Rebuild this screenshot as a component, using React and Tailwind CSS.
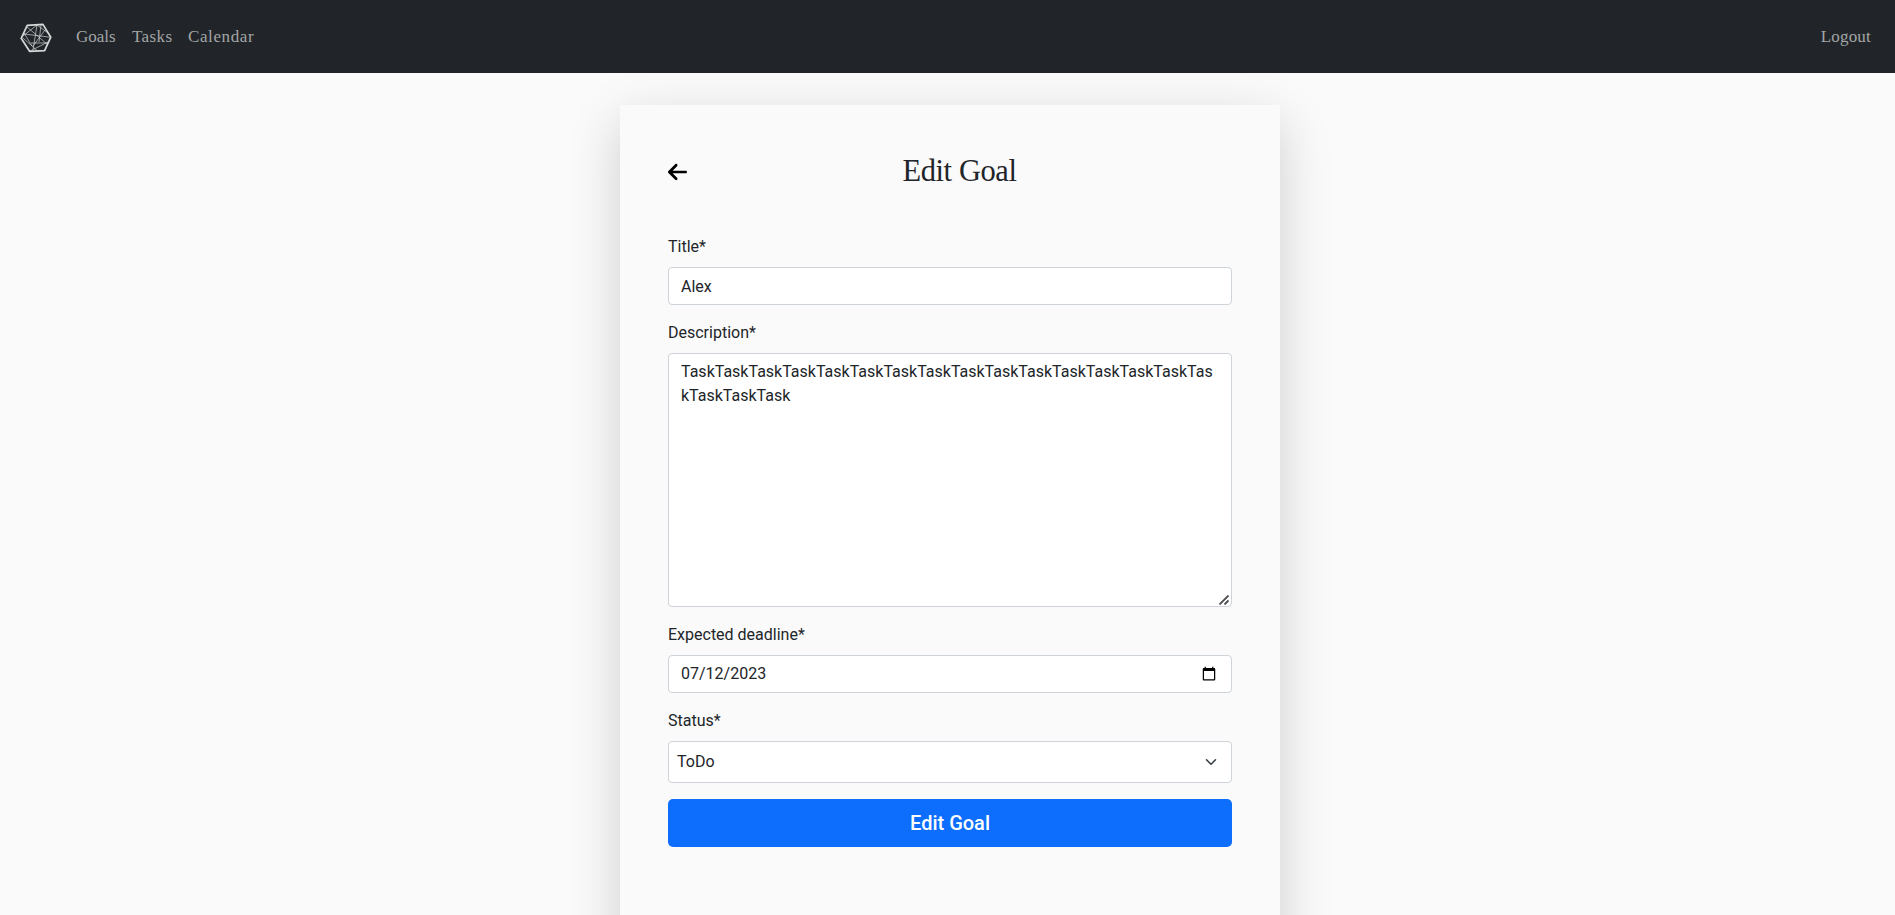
import { FaArrowLeft } from "react-icons/fa6";

const control =
  "block w-full rounded-[4px] border border-[#ced4da] bg-white text-base leading-6 text-[#212529] outline-none";

function Logo() {
  return (
    <svg width="32" height="32" viewBox="0 0 32 32" fill="none" stroke="#d6d7d8" strokeLinejoin="round">
      <path d="M1.2 16.3 7.2 3.3 22.9 2.4 30.8 15.2 24.6 28.6 9.6 29.3Z" strokeWidth="1.7" />
      <path
        d="M3 14 17 3 28 11M4 12 30 15.2M7 5 27 22M17 3 13 28M21 3 19 20M3 16 17 28.5M4 11 12 24M13 24 25 8M9.6 29.3 28 20M11 21 28 21"
        strokeWidth="0.9"
        opacity="0.75"
      />
    </svg>
  );
}

function Field({ label, children }) {
  return (
    <div className="mb-4">
      <label className="mb-2 block text-base leading-6">{label}</label>
      {children}
    </div>
  );
}

export default function App() {
  return (
    <div className="flex h-screen flex-col overflow-hidden bg-[#fafafa] font-[Roboto,sans-serif] text-[#212529]">
      <header className="flex h-[73px] shrink-0 items-center bg-[#212529] pr-6 pl-5 font-['Liberation_Serif',serif] text-[17px] leading-6 text-[#a3a5a6]">
        <div className="mt-[3px] mr-6 shrink-0">
          <Logo />
        </div>
        <nav className="flex flex-1 items-center">
          <a className="w-14">Goals</a>
          <a className="w-14 tracking-[0.4px]">Tasks</a>
          <a className="tracking-[0.6px]">Calendar</a>
        </nav>
        <a className="tracking-[0.2px]">Logout</a>
      </header>
      <main className="flex min-h-0 flex-1 pt-8 pl-[620px]">
        <section className="h-[900px] w-[660px] shrink-0 bg-[#fafafa] px-12 pt-12 shadow-[0_16px_48px_rgba(0,0,0,0.175)]">
          <div className="mb-12 flex h-[34px] items-center">
            <FaArrowLeft className="mt-[4px] h-[22px] w-[19px] text-black" />
            <h1 className="flex-1 pt-[2px] text-center font-['Liberation_Serif',serif] text-[30.5px] leading-[34px] tracking-[-0.4px]">
              Edit Goal
            </h1>
          </div>
          <form>
            <Field label="Title*">
              <input className={`${control} h-[38px] px-3 py-1.5`} defaultValue="Alex" />
            </Field>
            <Field label="Description*">
              <div className="relative">
                <textarea
                  rows={10}
                  className={`${control} h-[254px] resize-none px-3 py-1.5`}
                  defaultValue="TaskTaskTaskTaskTaskTaskTaskTaskTaskTaskTaskTaskTaskTaskTaskTaskTaskTaskTask"
                />
                <svg className="absolute right-[3px] bottom-[2px]" width="10" height="10" viewBox="0 0 10 10" fill="none" stroke="#4a4a4a" strokeWidth="1.8">
                  <path d="M.5 9.5 9.5.5M5.5 9.5 9.5 5.5" />
                </svg>
              </div>
            </Field>
            <Field label="Expected deadline*">
              <input
                type="date"
                className={`${control} h-[38px] px-3 py-1.5 [&::-webkit-datetime-edit-day-field]:px-0 [&::-webkit-datetime-edit-month-field]:px-0 [&::-webkit-datetime-edit-year-field]:px-0`}
                defaultValue="2023-07-12"
              />
            </Field>
            <Field label="Status*">
              <div className={`${control} flex h-[42px] items-center justify-between pr-3 pl-2`}>
                <span>ToDo</span>
                <svg width="16" height="12" viewBox="0 0 16 16" fill="none" stroke="#343a40" strokeWidth="2" strokeLinecap="round" strokeLinejoin="round">
                  <path d="m2 5 6 6 6-6" />
                </svg>
              </div>
            </Field>
            <button type="button" className="h-12 w-full rounded-[5px] bg-[#0d6efd] text-xl font-medium text-white">
              Edit Goal
            </button>
          </form>
        </section>
      </main>
    </div>
  );
}
